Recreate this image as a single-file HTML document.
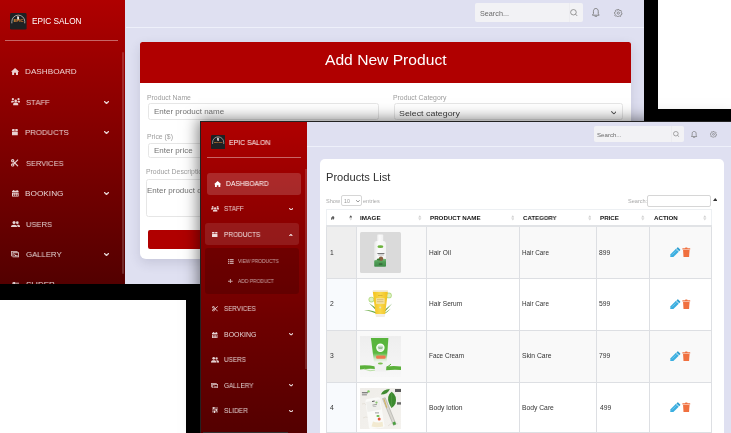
<!DOCTYPE html>
<html><head><meta charset="utf-8">
<style>
*{box-sizing:border-box;margin:0;padding:0}
html,body{width:731px;height:433px;overflow:hidden;background:#fff}
body{position:relative;font-family:"Liberation Sans",sans-serif}
.a{position:absolute}
.t{position:absolute;white-space:nowrap;line-height:1;will-change:transform}
</style></head><body>
<svg width="0" height="0" style="position:absolute">
<defs>
<symbol id="i-home" viewBox="0 0 16 14" preserveAspectRatio="none"><path d="M8 0 L16 7.2 L13.8 7.2 L13.8 14 L9.8 14 L9.8 9.5 L6.2 9.5 L6.2 14 L2.2 14 L2.2 7.2 L0 7.2 Z" fill="currentColor"/></symbol>
<symbol id="i-staff" viewBox="0 0 20 16" preserveAspectRatio="none"><g fill="currentColor"><circle cx="4" cy="2.6" r="2.4"/><circle cx="16" cy="2.6" r="2.4"/><path d="M0 10 C0 6.5 1.5 5.8 4 5.8 C5.5 5.8 6.3 6.2 6.8 6.8 C5.6 7.8 5 8.8 4.9 10 Z"/><path d="M20 10 C20 6.5 18.5 5.8 16 5.8 C14.5 5.8 13.7 6.2 13.2 6.8 C14.4 7.8 15 8.8 15.1 10 Z"/><circle cx="10" cy="6.3" r="2.9"/><path d="M4.6 16 V14.2 C4.6 11.2 6.5 10 10 10 C13.5 10 15.4 11.2 15.4 14.2 V16 Z"/></g></symbol>
<symbol id="i-box" viewBox="0 0 12 13" preserveAspectRatio="none"><g fill="currentColor"><path d="M0.8 0 H5.3 V4 H0 V1 Z"/><path d="M6.7 0 H11.2 L12 1 V4 H6.7 Z"/><rect x="0" y="5" width="12" height="8" rx="0.8"/></g></symbol>
<symbol id="i-scis" viewBox="0 0 16 16" preserveAspectRatio="none"><g fill="none" stroke="currentColor" stroke-width="2.4"><circle cx="3.6" cy="3.6" r="2.4"/><circle cx="3.6" cy="12.4" r="2.4"/><path d="M5.5 5.8 L15 14.8 M5.5 10.2 L15 1.2"/></g></symbol>
<symbol id="i-cal" viewBox="0 0 14 14" preserveAspectRatio="none"><g fill="currentColor"><rect x="2.5" y="0" width="2" height="3"/><rect x="9.5" y="0" width="2" height="3"/><rect x="0" y="1.8" width="14" height="3.4" rx="0.8"/><path d="M0 6.2 H14 V13.2 Q14 14 13.2 14 H0.8 Q0 14 0 13.2 Z M2 7.6 V9.2 H4.5 V7.6 Z M5.8 7.6 V9.2 H8.2 V7.6 Z M9.5 7.6 V9.2 H12 V7.6 Z M2 10.6 V12.2 H4.5 V10.6 Z M5.8 10.6 V12.2 H8.2 V10.6 Z M9.5 10.6 V12.2 H12 V10.6 Z" fill-rule="evenodd"/></g></symbol>
<symbol id="i-users" viewBox="0 0 18 13" preserveAspectRatio="none"><g fill="currentColor"><circle cx="6" cy="3" r="3"/><circle cx="12.5" cy="3.3" r="2.6"/><path d="M0 13 V11.5 C0 8.5 2 7.2 6 7.2 C10 7.2 12 8.5 12 11.5 V13 Z"/><path d="M13 13 V11.5 C13 9.8 12.5 8.6 11.5 7.7 C12 7.4 12.5 7.3 13 7.3 C16.3 7.3 18 8.6 18 11.3 V13 Z"/></g></symbol>
<symbol id="i-img" viewBox="0 0 16 13" preserveAspectRatio="none"><g fill="currentColor"><path d="M3 2.5 H15 Q16 2.5 16 3.5 V12 Q16 13 15 13 H4 Q3 13 3 12 Z M4.8 4.3 V11.2 H14.2 V4.3 Z" fill-rule="evenodd"/><path d="M1 0 H13 V1.6 H1.6 V10.5 H0 V1 Q0 0 1 0 Z"/><path d="M5.8 11 L9 7 L11 9 L12.3 7.8 L14 11 Z"/><circle cx="7" cy="6.3" r="1"/></g></symbol>
<symbol id="i-slid" viewBox="0 0 16 14" preserveAspectRatio="none"><g fill="currentColor"><rect x="0" y="1.5" width="16" height="1.8"/><rect x="0" y="6.1" width="16" height="1.8"/><rect x="0" y="10.7" width="16" height="1.8"/><rect x="3" y="0" width="3" height="4.8" rx="0.5"/><rect x="10" y="4.6" width="3" height="4.8" rx="0.5"/><rect x="5" y="9.2" width="3" height="4.8" rx="0.5"/></g></symbol>
<symbol id="i-chev" viewBox="0 0 10 6" preserveAspectRatio="none"><path d="M1 1 L5 5 L9 1" fill="none" stroke="currentColor" stroke-width="2.6" stroke-linecap="round" stroke-linejoin="round"/></symbol>
<symbol id="i-chevup" viewBox="0 0 10 6" preserveAspectRatio="none"><path d="M1 5 L5 1 L9 5" fill="none" stroke="currentColor" stroke-width="2.6" stroke-linecap="round" stroke-linejoin="round"/></symbol>
<symbol id="i-search" viewBox="0 0 16 16" preserveAspectRatio="none"><g fill="none" stroke="currentColor" stroke-width="1.5"><circle cx="6.8" cy="6.8" r="5.6"/><path d="M10.9 10.9 L15.2 15.2"/></g></symbol>
<symbol id="i-bell" viewBox="0 0 14 16" preserveAspectRatio="none"><path d="M7 0.8 C4 0.8 2.6 3.2 2.6 6 V9.6 L0.8 12.4 H13.2 L11.4 9.6 V6 C11.4 3.2 10 0.8 7 0.8 Z M5 13.6 C5.2 14.8 6 15.3 7 15.3 C8 15.3 8.8 14.8 9 13.6" fill="none" stroke="currentColor" stroke-width="1.5" stroke-linejoin="round"/></symbol>
<symbol id="i-gear" viewBox="0 0 16 16" preserveAspectRatio="none"><g fill="none" stroke="currentColor" stroke-width="1.4" stroke-linejoin="round"><circle cx="8" cy="8" r="2.2"/><path d="M6.9 0.8 H9.1 L9.5 2.6 Q10.4 2.9 11.1 3.4 L12.8 2.6 L14.1 4.4 L12.9 5.8 Q13.2 6.6 13.3 7.4 L15.2 8 L15 10.2 L13.1 10.6 Q12.8 11.4 12.3 12 L13.1 13.6 L11.3 14.9 L10 13.7 Q9.2 14 8.4 14.1 L7.9 15.2 H6.3 L5.8 13.9 Q5 13.6 4.3 13.1 L2.7 13.9 L1.3 12.2 L2.4 10.8 Q2.1 10 2 9.2 L0.8 8.6 L1 6.4 L2.5 6 Q2.8 5.2 3.3 4.5 L2.6 2.9 L4.3 1.5 L5.6 2.6 Q6.3 2.3 7 2.2 Z"/></g></symbol>
<symbol id="i-list" viewBox="0 0 16 16" preserveAspectRatio="none"><g fill="currentColor"><rect x="0" y="0" width="3.5" height="4"/><rect x="5" y="0" width="11" height="4"/><rect x="0" y="6" width="3.5" height="4"/><rect x="5" y="6" width="11" height="4"/><rect x="0" y="12" width="3.5" height="4"/><rect x="5" y="12" width="11" height="4"/></g></symbol>
<symbol id="i-plus" viewBox="0 0 16 16" preserveAspectRatio="none"><path d="M8 0 V16 M0 8 H16" stroke="currentColor" stroke-width="3.4"/></symbol>
<symbol id="i-chevthin" viewBox="0 0 10 6" preserveAspectRatio="none"><path d="M1 1 L5 5 L9 1" fill="none" stroke="currentColor" stroke-width="1.7" stroke-linecap="round" stroke-linejoin="round"/></symbol>
</defs></svg>

<div class="a" style="left:0.00px;top:0.00px;width:658.00px;height:300.00px;background:#000"></div>
<div class="a" style="left:186.00px;top:108.60px;width:545.00px;height:325.00px;background:#000"></div>
<div class="a" id="s1" style="left:0;top:0;width:644px;height:284px;overflow:hidden;background:#dfe0f1"><div class="a" style="left:0.00px;top:0.00px;width:125.30px;height:284.00px;background:linear-gradient(180deg,rgb(175,0,0) 0%,rgb(128,0,0) 50%,rgb(83,0,0) 100%)"></div>
<div class="a" style="left:122.30px;top:52.00px;width:1.80px;height:221.50px;background:rgba(255,255,255,0.16);border-radius:1px"></div>
<svg class="a" style="left:10.4px;top:13.3px" width="16.6" height="16.6" viewBox="0 0 17 17"><rect width="17" height="17" rx="1.5" fill="#1e2123"/><path d="M1.9 10.6 V8.6 A6.6 6.4 0 0 1 15.1 8.6 V10.6" fill="none" stroke="#b4b4b4" stroke-width="0.9"/><path d="M7.5 3.4 Q9.4 2.8 9.3 4.8 Q8.8 6.2 9.6 6.8 L7.7 6.9 Q7 5.2 7.5 3.4 Z" fill="#f2f2f2"/><circle cx="8.2" cy="2.5" r="0.6" fill="#a0603a"/><text x="8.5" y="9.6" font-size="2.7" font-weight="bold" text-anchor="middle" textLength="10" lengthAdjust="spacingAndGlyphs" fill="#e0963c" font-family="Liberation Sans">EPIC</text></svg>
<div class="a" style="left:5.00px;top:40.00px;width:113.00px;height:1.00px;background:rgba(255,255,255,0.4)"></div>
<svg class="a" style="left:11.00px;top:67.90px;color:rgba(255,255,255,0.82);" width="8.1" height="7.1"><use href="#i-home"/></svg>
<svg class="a" style="left:10.50px;top:98.30px;color:rgba(255,255,255,0.82);" width="9.4" height="7.4"><use href="#i-staff"/></svg>
<svg class="a" style="left:103.50px;top:100.70px;color:rgba(255,255,255,0.82);" width="5" height="3"><use href="#i-chev"/></svg>
<svg class="a" style="left:12.10px;top:129.00px;color:rgba(255,255,255,0.82);" width="5.9" height="6.6"><use href="#i-box"/></svg>
<svg class="a" style="left:103.50px;top:131.20px;color:rgba(255,255,255,0.82);" width="5" height="3"><use href="#i-chev"/></svg>
<svg class="a" style="left:11.20px;top:158.80px;color:rgba(255,255,255,0.82);" width="7.6" height="7.8"><use href="#i-scis"/></svg>
<svg class="a" style="left:11.90px;top:190.00px;color:rgba(255,255,255,0.82);" width="6.8" height="6.7"><use href="#i-cal"/></svg>
<svg class="a" style="left:103.50px;top:192.20px;color:rgba(255,255,255,0.82);" width="5" height="3"><use href="#i-chev"/></svg>
<svg class="a" style="left:10.60px;top:220.50px;color:rgba(255,255,255,0.82);" width="9.1" height="6.6"><use href="#i-users"/></svg>
<svg class="a" style="left:11.10px;top:251.10px;color:rgba(255,255,255,0.82);" width="8.1" height="6.6"><use href="#i-img"/></svg>
<svg class="a" style="left:103.50px;top:253.20px;color:rgba(255,255,255,0.82);" width="5" height="3"><use href="#i-chev"/></svg>
<svg class="a" style="left:11.50px;top:281.50px;color:rgba(255,255,255,0.82);" width="7.5" height="6.8"><use href="#i-slid"/></svg>
<svg class="a" style="left:103.50px;top:283.70px;color:rgba(255,255,255,0.82);" width="5" height="3"><use href="#i-chev"/></svg>
<div class="a" style="left:126.00px;top:27.00px;width:518.00px;height:1.30px;background:#eef0fa"></div>
<div class="a" style="left:475.00px;top:2.50px;width:108.30px;height:19.60px;background:#f2f2f5;border-radius:2px"></div>
<div class="a" style="left:568.80px;top:2.50px;width:0.80px;height:19.60px;background:#ececf0"></div>
<svg class="a" style="left:570.00px;top:8.60px;color:#777;" width="8.1" height="7.7"><use href="#i-search"/></svg>
<svg class="a" style="left:592.10px;top:8.10px;color:#747474;" width="7.7" height="9.3"><use href="#i-bell"/></svg>
<svg class="a" style="left:614.20px;top:8.80px;color:#747474;" width="8.6" height="8.2"><use href="#i-gear"/></svg>
<div class="a" style="left:140.00px;top:42.40px;width:491.00px;height:216.40px;background:#fff;border-radius:3px 3px 6px 6px;box-shadow:0 4px 12px rgba(40,40,80,0.14)"></div>
<div class="a" style="left:140.00px;top:42.40px;width:491.00px;height:40.80px;background:#b00000;border-radius:2.5px 2.5px 0 0"></div>
<div class="a" style="left:148.00px;top:103.30px;width:231.00px;height:16.40px;border:1px solid #e6e6e6;border-radius:2.5px"></div>
<div class="a" style="left:393.50px;top:103.40px;width:229.70px;height:16.60px;border:1px solid #e6e6e6;border-radius:2.5px"></div>
<svg class="a" style="left:610.50px;top:111.00px;color:#505050;" width="5.8" height="3.6"><use href="#i-chevthin"/></svg>
<div class="a" style="left:148.00px;top:142.50px;width:231.00px;height:15.50px;border:1px solid #e6e6e6;border-radius:2.5px"></div>
<div class="a" style="left:146.40px;top:178.60px;width:477.00px;height:38.50px;border:1px solid #e6e6e6;border-radius:2.5px"></div>
<div class="a" style="left:148.00px;top:230.00px;width:475.00px;height:19.00px;background:#b00000;border-radius:2px"></div>
<div class="t" style="left:32.34px;top:18.43px;font-size:8.2px;color:#fff;font-weight:normal;transform:scaleX(1.0086);transform-origin:0 0;">EPIC SALON</div>
<div class="t" style="left:25.45px;top:68.40px;font-size:8px;color:rgba(255,255,255,0.82);font-weight:normal;transform:scaleX(1.0205);transform-origin:0 0;">DASHBOARD</div>
<div class="t" style="left:25.71px;top:98.90px;font-size:8px;color:rgba(255,255,255,0.82);font-weight:normal;transform:scaleX(0.9625);transform-origin:0 0;">STAFF</div>
<div class="t" style="left:25.48px;top:128.80px;font-size:8px;color:rgba(255,255,255,0.82);font-weight:normal;transform:scaleX(0.9745);transform-origin:0 0;">PRODUCTS</div>
<div class="t" style="left:25.73px;top:159.50px;font-size:8px;color:rgba(255,255,255,0.82);font-weight:normal;transform:scaleX(0.9312);transform-origin:0 0;">SERVICES</div>
<div class="t" style="left:25.44px;top:190.00px;font-size:8px;color:rgba(255,255,255,0.82);font-weight:normal;transform:scaleX(1.0310);transform-origin:0 0;">BOOKING</div>
<div class="t" style="left:25.50px;top:220.60px;font-size:8px;color:rgba(255,255,255,0.82);font-weight:normal;transform:scaleX(0.9450);transform-origin:0 0;">USERS</div>
<div class="t" style="left:25.71px;top:250.60px;font-size:8px;color:rgba(255,255,255,0.82);font-weight:normal;transform:scaleX(0.9679);transform-origin:0 0;">GALLERY</div>
<div class="t" style="left:25.70px;top:281.10px;font-size:8px;color:rgba(255,255,255,0.82);font-weight:normal;">SLIDER</div>
<div class="t" style="left:480.14px;top:9.55px;font-size:7px;color:#6a6a6a;font-weight:normal;transform:scaleX(1.0326);transform-origin:0 0;">Search...</div>
<div class="t" style="left:324.70px;top:53.00px;font-size:14px;color:#fff;font-weight:normal;transform:scaleX(1.1155);transform-origin:0 0;">Add New Product</div>
<div class="t" style="left:147.35px;top:94.57px;font-size:6.5px;color:#9c9c9c;font-weight:normal;transform:scaleX(1.0575);transform-origin:0 0;">Product Name</div>
<div class="t" style="left:392.75px;top:94.57px;font-size:6.5px;color:#9c9c9c;font-weight:normal;transform:scaleX(1.0575);transform-origin:0 0;">Product Category</div>
<div class="t" style="left:147.45px;top:133.67px;font-size:6.5px;color:#9c9c9c;font-weight:normal;transform:scaleX(1.0575);transform-origin:0 0;">Price ($)</div>
<div class="t" style="left:146.25px;top:169.38px;font-size:6.5px;color:#9c9c9c;font-weight:normal;transform:scaleX(1.0575);transform-origin:0 0;">Product Description</div>
<div class="t" style="left:154.16px;top:108.04px;font-size:7.6px;color:#727272;font-weight:normal;transform:scaleX(1.0514);transform-origin:0 0;">Enter product name</div>
<div class="t" style="left:153.96px;top:147.44px;font-size:7.6px;color:#727272;font-weight:normal;transform:scaleX(1.0514);transform-origin:0 0;">Enter price</div>
<div class="t" style="left:146.56px;top:186.94px;font-size:7.6px;color:#727272;font-weight:normal;transform:scaleX(1.0514);transform-origin:0 0;">Enter product description</div>
<div class="t" style="left:399.06px;top:109.70px;font-size:8px;color:#404040;font-weight:normal;transform:scaleX(1.1056);transform-origin:0 0;">Select category</div></div>
<div class="a" id="s2" style="left:200px;top:121px;width:531px;height:312px;background:#dfe0f1;box-shadow:0 0 14px 2px rgba(0,0,0,0.5)"><div class="a" style="left:0;top:0;width:531px;height:312px;overflow:hidden"><div class="a" style="left:0.00px;top:0.00px;width:107.00px;height:312.00px;background:linear-gradient(180deg,rgb(176,0,0) 0%,rgb(148,0,0) 25%,rgb(110,0,0) 64%,rgb(84,0,0) 100%)"></div>
<div class="a" style="left:104.50px;top:48.00px;width:2.20px;height:200.00px;background:rgba(255,255,255,0.14)"></div>
<svg class="a" style="left:10.7px;top:13.6px" width="14.3" height="14.3" viewBox="0 0 17 17"><rect width="17" height="17" rx="1.5" fill="#1e2123"/><path d="M1.9 10.6 V8.6 A6.6 6.4 0 0 1 15.1 8.6 V10.6" fill="none" stroke="#b4b4b4" stroke-width="0.9"/><path d="M7.5 3.4 Q9.4 2.8 9.3 4.8 Q8.8 6.2 9.6 6.8 L7.7 6.9 Q7 5.2 7.5 3.4 Z" fill="#f2f2f2"/><circle cx="8.2" cy="2.5" r="0.6" fill="#a0603a"/><text x="8.5" y="9.6" font-size="2.7" font-weight="bold" text-anchor="middle" textLength="10" lengthAdjust="spacingAndGlyphs" fill="#e0963c" font-family="Liberation Sans">EPIC</text></svg>
<div class="a" style="left:6.50px;top:36.00px;width:94.70px;height:1.00px;background:rgba(255,255,255,0.4)"></div>
<div class="a" style="left:7.00px;top:51.70px;width:94.20px;height:22.80px;background:rgba(255,255,255,0.16);border-radius:3px"></div>
<svg class="a" style="left:13.50px;top:60.00px;color:#fff;" width="7.3" height="6.3"><use href="#i-home"/></svg>
<svg class="a" style="left:10.80px;top:85.20px;color:rgba(255,255,255,0.82);" width="8.3" height="5.8"><use href="#i-staff"/></svg>
<svg class="a" style="left:88.80px;top:86.60px;color:rgba(255,255,255,0.82);" width="4.3" height="2.6"><use href="#i-chev"/></svg>
<div class="a" style="left:4.60px;top:102.30px;width:94.40px;height:22.20px;background:rgba(255,255,255,0.1);border-radius:3px"></div>
<svg class="a" style="left:12.00px;top:110.50px;color:rgba(255,255,255,0.85);" width="5.7" height="5.2"><use href="#i-box"/></svg>
<svg class="a" style="left:89.30px;top:112.80px;color:rgba(255,255,255,0.9);" width="3.8" height="2.5"><use href="#i-chevup"/></svg>
<div class="a" style="left:4.60px;top:126.80px;width:94.40px;height:46.70px;background:rgba(0,0,0,0.16);border-radius:3px"></div>
<svg class="a" style="left:28.00px;top:137.60px;color:rgba(255,255,255,0.62);" width="5.8" height="5.2"><use href="#i-list"/></svg>
<svg class="a" style="left:28.30px;top:157.80px;color:rgba(255,255,255,0.62);" width="4.8" height="4.6"><use href="#i-plus"/></svg>
<svg class="a" style="left:11.70px;top:185.00px;color:rgba(255,255,255,0.82);" width="6.2" height="5.6"><use href="#i-scis"/></svg>
<svg class="a" style="left:12.20px;top:210.50px;color:rgba(255,255,255,0.82);" width="5.7" height="6"><use href="#i-cal"/></svg>
<svg class="a" style="left:88.80px;top:212.20px;color:rgba(255,255,255,0.82);" width="4.3" height="2.6"><use href="#i-chev"/></svg>
<svg class="a" style="left:11.10px;top:235.80px;color:rgba(255,255,255,0.82);" width="8.1" height="5.8"><use href="#i-users"/></svg>
<svg class="a" style="left:11.10px;top:261.60px;color:rgba(255,255,255,0.82);" width="7.1" height="5.4"><use href="#i-img"/></svg>
<svg class="a" style="left:88.80px;top:263.20px;color:rgba(255,255,255,0.82);" width="4.3" height="2.6"><use href="#i-chev"/></svg>
<svg class="a" style="left:11.80px;top:286.40px;color:rgba(255,255,255,0.82);" width="6.1" height="5.9"><use href="#i-slid"/></svg>
<svg class="a" style="left:88.80px;top:288.50px;color:rgba(255,255,255,0.82);" width="4.3" height="2.6"><use href="#i-chev"/></svg>
<div class="a" style="left:2.80px;top:310.50px;width:85.00px;height:2.00px;background:#333"></div>
<div class="a" style="left:107.00px;top:24.50px;width:424.00px;height:1.20px;background:#eef0fa"></div>
<div class="a" style="left:393.50px;top:4.80px;width:90.40px;height:16.00px;background:#f2f2f5;border-radius:2px"></div>
<div class="a" style="left:471.00px;top:4.80px;width:0.80px;height:16.00px;background:#ececf0"></div>
<svg class="a" style="left:473.00px;top:10.00px;color:#777;" width="6.7" height="6.4"><use href="#i-search"/></svg>
<svg class="a" style="left:491.30px;top:9.60px;color:#747474;" width="6.3" height="7.1"><use href="#i-bell"/></svg>
<svg class="a" style="left:510.00px;top:10.00px;color:#747474;" width="7" height="6.7"><use href="#i-gear"/></svg>
<div class="a" style="left:120.20px;top:38.20px;width:403.50px;height:300.00px;background:#fff;border-radius:5px"></div>
<div class="a" style="left:141.00px;top:74.10px;width:20.80px;height:10.90px;border:1px solid #d6d6d6;border-radius:2px;background:#fff"></div>
<svg class="a" style="left:156.30px;top:78.80px;color:#666;" width="3.9" height="2.5"><use href="#i-chevthin"/></svg>
<div class="a" style="left:447.30px;top:74.30px;width:64.20px;height:12.20px;border:1px solid #d6d6d6;border-radius:2px;background:#fff"></div>
<svg class="a" style="left:512.7px;top:76.5px" width="4.5" height="3"><path d="M2.25 0 L4.5 3 H0 Z" fill="#333"/></svg>
<div class="a" style="left:126.00px;top:105.40px;width:385.50px;height:51.60px;background:#f9f9f9"></div>
<div class="a" style="left:126.00px;top:105.40px;width:30.50px;height:51.60px;background:#eeeeee"></div>
<div class="a" style="left:126.00px;top:157.00px;width:385.50px;height:52.20px;background:#ffffff"></div>
<div class="a" style="left:126.00px;top:157.00px;width:30.50px;height:52.20px;background:#f8fafd"></div>
<div class="a" style="left:126.00px;top:209.20px;width:385.50px;height:52.00px;background:#f9f9f9"></div>
<div class="a" style="left:126.00px;top:209.20px;width:30.50px;height:52.00px;background:#eeeeee"></div>
<div class="a" style="left:126.00px;top:261.20px;width:385.50px;height:50.10px;background:#ffffff"></div>
<div class="a" style="left:126.00px;top:261.20px;width:30.50px;height:50.10px;background:#f8fafd"></div>
<div class="a" style="left:126.00px;top:88.70px;width:385.50px;height:16.60px;background:#fff"></div>
<div class="a" style="left:125.50px;top:105.30px;width:1.00px;height:320.00px;background:#dddfe3"></div>
<div class="a" style="left:156.00px;top:105.30px;width:1.00px;height:320.00px;background:#dddfe3"></div>
<div class="a" style="left:225.70px;top:105.30px;width:1.00px;height:320.00px;background:#dddfe3"></div>
<div class="a" style="left:318.50px;top:105.30px;width:1.00px;height:320.00px;background:#dddfe3"></div>
<div class="a" style="left:396.00px;top:105.30px;width:1.00px;height:320.00px;background:#dddfe3"></div>
<div class="a" style="left:449.00px;top:105.30px;width:1.00px;height:320.00px;background:#dddfe3"></div>
<div class="a" style="left:511.00px;top:105.30px;width:1.00px;height:320.00px;background:#dddfe3"></div>
<div class="a" style="left:125.50px;top:88.70px;width:1.00px;height:16.60px;background:#edf0f3"></div>
<div class="a" style="left:511.00px;top:88.70px;width:1.00px;height:16.60px;background:#edf0f3"></div>
<div class="a" style="left:126.00px;top:88.20px;width:385.50px;height:1.00px;background:#edf0f3"></div>
<div class="a" style="left:126.00px;top:104.10px;width:385.50px;height:1.80px;background:#e1e3e6"></div>
<div class="a" style="left:126.00px;top:156.50px;width:385.50px;height:1.00px;background:#dddfe3"></div>
<div class="a" style="left:126.00px;top:208.70px;width:385.50px;height:1.00px;background:#dddfe3"></div>
<div class="a" style="left:126.00px;top:260.70px;width:385.50px;height:1.00px;background:#dddfe3"></div>
<div class="a" style="left:126.00px;top:310.80px;width:385.50px;height:1.00px;background:#dddfe3"></div>
<svg class="a" style="left:148.70px;top:94.2px" width="3.6" height="5.8" viewBox="0 0 4 9" preserveAspectRatio="none"><path d="M2 0.3 L3.8 3.9 H0.2 Z" fill="#505050"/><path d="M2 8.7 L3.8 5.1 H0.2 Z" fill="#d8d8d8"/></svg>
<svg class="a" style="left:218.00px;top:94.2px" width="3.6" height="5.8" viewBox="0 0 4 9" preserveAspectRatio="none"><path d="M2 0.3 L3.8 3.9 H0.2 Z" fill="#d0d0d0"/><path d="M2 8.7 L3.8 5.1 H0.2 Z" fill="#d8d8d8"/></svg>
<svg class="a" style="left:310.70px;top:94.2px" width="3.6" height="5.8" viewBox="0 0 4 9" preserveAspectRatio="none"><path d="M2 0.3 L3.8 3.9 H0.2 Z" fill="#d0d0d0"/><path d="M2 8.7 L3.8 5.1 H0.2 Z" fill="#d8d8d8"/></svg>
<svg class="a" style="left:387.60px;top:94.2px" width="3.6" height="5.8" viewBox="0 0 4 9" preserveAspectRatio="none"><path d="M2 0.3 L3.8 3.9 H0.2 Z" fill="#d0d0d0"/><path d="M2 8.7 L3.8 5.1 H0.2 Z" fill="#d8d8d8"/></svg>
<svg class="a" style="left:441.00px;top:94.2px" width="3.6" height="5.8" viewBox="0 0 4 9" preserveAspectRatio="none"><path d="M2 0.3 L3.8 3.9 H0.2 Z" fill="#d0d0d0"/><path d="M2 8.7 L3.8 5.1 H0.2 Z" fill="#d8d8d8"/></svg>
<svg class="a" style="left:503.00px;top:94.2px" width="3.6" height="5.8" viewBox="0 0 4 9" preserveAspectRatio="none"><path d="M2 0.3 L3.8 3.9 H0.2 Z" fill="#d0d0d0"/><path d="M2 8.7 L3.8 5.1 H0.2 Z" fill="#d8d8d8"/></svg>
<svg class="a" style="left:470.3px;top:125.60px" width="10.6" height="10.6" viewBox="0 0 16 16"><path d="M12.4 0.6 L15.4 3.6 Q16 4.2 15.4 4.8 L13.9 6.3 L9.7 2.1 L11.2 0.6 Q11.8 0 12.4 0.6 Z" fill="#2f9fd0"/><path d="M9 2.8 L13.2 7 L5 15.2 L0.3 15.7 L0.8 11 Z" fill="#3aaee0"/><path d="M2.6 12.4 L10.6 4.4" stroke="#d8f0fa" stroke-width="0.8" stroke-dasharray="1.4 1.2"/></svg>
<svg class="a" style="left:482px;top:126.00px" width="8.6" height="10.4" viewBox="0 0 13 16"><path d="M0.5 2 H4.5 L5.2 0.8 H7.8 L8.5 2 H12.5 V4 H0.5 Z" fill="#f0703f"/><path d="M1.5 4.6 H11.5 L10.8 15.4 H2.2 Z" fill="#f0703f"/></svg>
<div class="a" style="left:160px;top:111.00px;width:41px;height:41px"><svg width="41" height="41" viewBox="0 0 41 41"><defs><linearGradient id="bo1" x1="0" x2="1"><stop offset="0" stop-color="#e8e8e8"/><stop offset="0.35" stop-color="#fbfbfb"/><stop offset="1" stop-color="#f2f2f2"/></linearGradient><linearGradient id="gb1" x1="0" y1="0" x2="0" y2="1"><stop offset="0" stop-color="#7cc080"/><stop offset="0.4" stop-color="#4f9d55"/><stop offset="1" stop-color="#3f8a48"/></linearGradient></defs>
<rect x="0" y="0" width="41" height="41" rx="1.5" fill="#dadada"/>
<rect x="17" y="2.4" width="6.2" height="7" rx="0.8" fill="url(#bo1)"/>
<path d="M14.2 12 Q14.2 9 17 9 H23.2 Q26 9 26 12 V34 Q26 34.8 25.2 34.8 H15 Q14.2 34.8 14.2 34 Z" fill="url(#bo1)"/>
<ellipse cx="20.4" cy="14.7" rx="3" ry="1.4" fill="#6cb23c"/>
<rect x="17.4" y="21" width="7" height="1" fill="#777"/><rect x="18.2" y="22.6" width="5.6" height="0.7" fill="#999"/>
<path d="M14.2 28.5 Q20 26 26 27 V34 Q26 34.8 25.2 34.8 H15 Q14.2 34.8 14.2 34 Z" fill="url(#gb1)"/>
<circle cx="21" cy="26.8" r="2.2" fill="#8a6040"/><ellipse cx="18.6" cy="27.6" rx="1.8" ry="1" fill="#3a7a30"/>
<rect x="18.8" y="31.6" width="3.6" height="0.9" fill="#2a4a2a"/></svg></div>
<svg class="a" style="left:470.3px;top:177.50px" width="10.6" height="10.6" viewBox="0 0 16 16"><path d="M12.4 0.6 L15.4 3.6 Q16 4.2 15.4 4.8 L13.9 6.3 L9.7 2.1 L11.2 0.6 Q11.8 0 12.4 0.6 Z" fill="#2f9fd0"/><path d="M9 2.8 L13.2 7 L5 15.2 L0.3 15.7 L0.8 11 Z" fill="#3aaee0"/><path d="M2.6 12.4 L10.6 4.4" stroke="#d8f0fa" stroke-width="0.8" stroke-dasharray="1.4 1.2"/></svg>
<svg class="a" style="left:482px;top:177.90px" width="8.6" height="10.4" viewBox="0 0 13 16"><path d="M0.5 2 H4.5 L5.2 0.8 H7.8 L8.5 2 H12.5 V4 H0.5 Z" fill="#f0703f"/><path d="M1.5 4.6 H11.5 L10.8 15.4 H2.2 Z" fill="#f0703f"/></svg>
<div class="a" style="left:160px;top:162.60px;width:41px;height:41px"><svg width="41" height="41" viewBox="0 0 41 41"><defs><linearGradient id="yt2" x1="0" x2="1"><stop offset="0" stop-color="#f3c21e"/><stop offset="0.5" stop-color="#f9d84a"/><stop offset="1" stop-color="#f0c020"/></linearGradient></defs>
<circle cx="11.4" cy="15.6" r="2.9" fill="#b4dc84"/><circle cx="11.4" cy="15.6" r="2" fill="#dff0c6"/>
<circle cx="28.9" cy="11.4" r="2.9" fill="#b4dc84"/><circle cx="28.9" cy="11.4" r="2" fill="#dff0c6"/>
<path d="M20 30.5 Q14 24 9 19 Q15 22.5 20.5 29 Z" fill="#5e9e3a"/>
<path d="M19.5 31 Q11 27 4 26 Q12 25.5 20 30 Z" fill="#6aab45"/>
<path d="M21 30.5 Q26 24 32.2 19.4 Q27.5 24.5 22 31 Z" fill="#5e9e3a"/>
<path d="M21.5 31 Q27 27.5 31 24.5 Q27.5 28.5 22 31.5 Z" fill="#6aab45"/>
<path d="M12.8 7.6 H27.9 L25.1 30.3 H15.6 Z" fill="url(#yt2)"/>
<rect x="12.8" y="6.2" width="15.1" height="1.6" fill="#f1e8d2"/>
<rect x="18" y="11" width="4.5" height="0.6" fill="#c9a030"/>
<rect x="16.1" y="14.2" width="8.5" height="5.7" fill="#f4e2a0"/><rect x="17" y="15.5" width="6.5" height="0.6" fill="#c8a860"/><rect x="17" y="17.5" width="6.5" height="0.6" fill="#c8a860"/>
<circle cx="20.2" cy="23.5" r="1" fill="#e8e0c0"/>
<path d="M15.6 30 H25.1 L24.8 32.4 Q24.7 32.9 24.2 32.9 H16.5 Q16 32.9 15.9 32.4 Z" fill="#f3eee6"/></svg></div>
<svg class="a" style="left:470.3px;top:229.60px" width="10.6" height="10.6" viewBox="0 0 16 16"><path d="M12.4 0.6 L15.4 3.6 Q16 4.2 15.4 4.8 L13.9 6.3 L9.7 2.1 L11.2 0.6 Q11.8 0 12.4 0.6 Z" fill="#2f9fd0"/><path d="M9 2.8 L13.2 7 L5 15.2 L0.3 15.7 L0.8 11 Z" fill="#3aaee0"/><path d="M2.6 12.4 L10.6 4.4" stroke="#d8f0fa" stroke-width="0.8" stroke-dasharray="1.4 1.2"/></svg>
<svg class="a" style="left:482px;top:230.00px" width="8.6" height="10.4" viewBox="0 0 13 16"><path d="M0.5 2 H4.5 L5.2 0.8 H7.8 L8.5 2 H12.5 V4 H0.5 Z" fill="#f0703f"/><path d="M1.5 4.6 H11.5 L10.8 15.4 H2.2 Z" fill="#f0703f"/></svg>
<div class="a" style="left:160px;top:214.80px;width:41px;height:41px"><svg width="41" height="41" viewBox="0 0 41 41"><defs><linearGradient id="gt3" x1="0" y1="0" x2="0" y2="1"><stop offset="0" stop-color="#58b43c"/><stop offset="0.45" stop-color="#5cb840"/><stop offset="0.62" stop-color="#cfe8c4"/><stop offset="0.72" stop-color="#f2f4f2"/><stop offset="1" stop-color="#f0f0f0"/></linearGradient><linearGradient id="bg3" x1="0" y1="0" x2="0" y2="1"><stop offset="0" stop-color="#eeeeee"/><stop offset="1" stop-color="#f7f7f7"/></linearGradient></defs>
<rect width="41" height="41" fill="url(#bg3)"/>
<path d="M0 29.5 Q8 28.8 15.5 30.5 L15.5 33 Q8 32.5 0 33.5 Z" fill="#5ab03a"/>
<path d="M26 30.5 Q34 29.5 41 30.5 L41 34 Q34 33.5 26 34.2 Z" fill="#5ab03a"/>
<path d="M4 33 Q10 36 16 34" stroke="#a8d890" stroke-width="0.8" fill="none"/>
<path d="M10.9 1.9 H28.4 L26 35.5 H15.2 Z" fill="url(#gt3)"/>
<circle cx="20.4" cy="11.8" r="4.2" fill="#ffffff"/><circle cx="20.4" cy="11.8" r="3.1" fill="#e4efe0"/><rect x="18" y="10.8" width="4.8" height="0.7" fill="#5a9a5a"/><rect x="18.5" y="12.3" width="3.8" height="0.6" fill="#5a9a5a"/>
<rect x="16.1" y="19.4" width="9.5" height="3.3" rx="1.2" fill="#f07850"/>
<ellipse cx="20.4" cy="27.5" rx="2.5" ry="1" fill="#7cc050"/>
<path d="M31 28 Q29 30 27 31" stroke="#5ab03a" stroke-width="1" fill="none"/></svg></div>
<svg class="a" style="left:470.3px;top:280.65px" width="10.6" height="10.6" viewBox="0 0 16 16"><path d="M12.4 0.6 L15.4 3.6 Q16 4.2 15.4 4.8 L13.9 6.3 L9.7 2.1 L11.2 0.6 Q11.8 0 12.4 0.6 Z" fill="#2f9fd0"/><path d="M9 2.8 L13.2 7 L5 15.2 L0.3 15.7 L0.8 11 Z" fill="#3aaee0"/><path d="M2.6 12.4 L10.6 4.4" stroke="#d8f0fa" stroke-width="0.8" stroke-dasharray="1.4 1.2"/></svg>
<svg class="a" style="left:482px;top:281.05px" width="8.6" height="10.4" viewBox="0 0 13 16"><path d="M0.5 2 H4.5 L5.2 0.8 H7.8 L8.5 2 H12.5 V4 H0.5 Z" fill="#f0703f"/><path d="M1.5 4.6 H11.5 L10.8 15.4 H2.2 Z" fill="#f0703f"/></svg>
<div class="a" style="left:160px;top:266.80px;width:41px;height:41px"><svg width="41" height="41" viewBox="0 0 41 41"><defs><linearGradient id="bg4" x1="0" y1="0" x2="1" y2="1"><stop offset="0" stop-color="#efede9"/><stop offset="1" stop-color="#f4f2ee"/></linearGradient></defs>
<rect width="41" height="41" fill="url(#bg4)"/>
<path d="M3 30 Q8 27 12 33 M28 38 Q33 33 38 36 M2 16 Q5 14 7 18" stroke="#e2ddd4" stroke-width="0.8" fill="none"/>
<rect x="1.9" y="4.2" width="6" height="1.1" fill="#666"/><rect x="1.9" y="6.4" width="5" height="0.9" fill="#777"/><circle cx="8.5" cy="3.4" r="1.2" fill="#7cc860"/>
<rect x="35" y="1" width="6" height="3" fill="#5a5a5a"/><rect x="37" y="14.2" width="4" height="2.4" fill="#6a6a6a"/>
<path d="M5.5 13.5 Q5.3 11.5 7.2 11 L18 9.2 Q19.8 9 20.2 10.8 L24.5 37.5 Q24.8 39.3 23 39.6 L11 41 Q9.2 41.2 9 39.4 Z" fill="#fafaf8"/>
<path d="M6 14 L19.5 11.5 L21 21.5 L7.6 24 Z" fill="#efefec"/>
<rect x="12" y="12.8" width="2.6" height="1" fill="#555" transform="rotate(-10 13 13)"/><circle cx="16.5" cy="14.6" r="1.1" fill="#8cc870"/><rect x="12.5" y="16.5" width="4.5" height="0.8" fill="#888" transform="rotate(-10 14 17)"/><rect x="12.8" y="18.2" width="3.5" height="0.7" fill="#aaa" transform="rotate(-10 14 18.5)"/>
<rect x="15" y="24.5" width="4" height="0.8" fill="#888"/><ellipse cx="18" cy="28" rx="1.6" ry="1" fill="#6cbc50"/><circle cx="19.2" cy="31" r="1.5" fill="#e45a3a"/>
<path d="M13 33.5 Q18 35.5 22.5 33.8 L23.2 38.5 Q17 39.8 11.5 38.5 Z" fill="#efe4c4" opacity="0.75"/>
<path d="M22.5 10.6 L25.2 9.8 L36 36.3 L33.4 37.3 Z" fill="#d9d7d0" stroke="#9a9a96" stroke-width="0.5"/><path d="M23.4 11 L24.4 10.7 L27.3 19.6 L26.3 19.9 Z" fill="#d4b460"/>
<path d="M32.6 34.5 L35 33.6 L36 36.3 L33.4 37.3 Z" fill="#4aa040"/>
<path d="M20.8 6.6 Q23 1 29.8 0.9 Q28 6.5 20.8 6.6 Z" fill="#3f8a30"/>
<path d="M31.7 3.8 Q37.5 8 35.5 15.5 Q34 19 31.5 19.9 Q27.5 14 28.2 9 Q29 5.5 31.7 3.8 Z" fill="#3c8a2e"/><path d="M31.7 4.5 L31.5 19.5" stroke="#68a858" stroke-width="0.4"/>
</svg></div>
<div class="t" style="left:29.35px;top:18.05px;font-size:7px;color:#fff;font-weight:normal;transform:scaleX(0.9834);transform-origin:0 0;">EPIC SALON</div>
<div class="t" style="left:25.96px;top:59.97px;font-size:6.8px;color:#fff;font-weight:normal;transform:scaleX(0.9875);transform-origin:0 0;">DASHBOARD</div>
<div class="t" style="left:23.88px;top:85.12px;font-size:6.8px;color:rgba(255,255,255,0.82);font-weight:normal;transform:scaleX(0.9412);transform-origin:0 0;">STAFF</div>
<div class="t" style="left:23.68px;top:110.72px;font-size:6.8px;color:rgba(255,255,255,0.9);font-weight:normal;transform:scaleX(0.9536);transform-origin:0 0;">PRODUCTS</div>
<div class="t" style="left:23.79px;top:185.32px;font-size:6.8px;color:rgba(255,255,255,0.82);font-weight:normal;transform:scaleX(0.9258);transform-origin:0 0;">SERVICES</div>
<div class="t" style="left:23.54px;top:210.72px;font-size:6.8px;color:rgba(255,255,255,0.82);font-weight:normal;transform:scaleX(1.0206);transform-origin:0 0;">BOOKING</div>
<div class="t" style="left:23.59px;top:235.82px;font-size:6.8px;color:rgba(255,255,255,0.82);font-weight:normal;transform:scaleX(0.9302);transform-origin:0 0;">USERS</div>
<div class="t" style="left:23.78px;top:261.72px;font-size:6.8px;color:rgba(255,255,255,0.82);font-weight:normal;transform:scaleX(0.9435);transform-origin:0 0;">GALLERY</div>
<div class="t" style="left:23.77px;top:287.02px;font-size:6.8px;color:rgba(255,255,255,0.82);font-weight:normal;transform:scaleX(0.9720);transform-origin:0 0;">SLIDER</div>
<div class="t" style="left:37.85px;top:138.35px;font-size:5px;color:rgba(255,255,255,0.62);font-weight:normal;transform:scaleX(0.9631);transform-origin:0 0;">VIEW PRODUCTS</div>
<div class="t" style="left:37.90px;top:158.15px;font-size:5px;color:rgba(255,255,255,0.62);font-weight:normal;transform:scaleX(0.9795);transform-origin:0 0;">ADD PRODUCT</div>
<div class="t" style="left:397.39px;top:10.80px;font-size:6px;color:#6a6a6a;font-weight:normal;transform:scaleX(1.0190);transform-origin:0 0;">Search...</div>
<div class="t" style="left:125.51px;top:50.67px;font-size:10.5px;color:#2f2f2f;font-weight:normal;transform:scaleX(1.0595);transform-origin:0 0;">Products List</div>
<div class="t" style="left:125.72px;top:77.90px;font-size:5.3px;color:#a8a8a8;font-weight:normal;transform:scaleX(1.0551);transform-origin:0 0;">Show</div>
<div class="t" style="left:163.28px;top:77.90px;font-size:5.3px;color:#a8a8a8;font-weight:normal;transform:scaleX(1.0551);transform-origin:0 0;">entries</div>
<div class="t" style="left:427.92px;top:77.90px;font-size:5.3px;color:#a8a8a8;font-weight:normal;transform:scaleX(1.0551);transform-origin:0 0;">Search:</div>
<div class="t" style="left:144.18px;top:78.25px;font-size:5px;color:#9a9a9a;font-weight:normal;transform:scaleX(1.0505);transform-origin:0 0;">10</div>
<div class="t" style="left:160.36px;top:93.93px;font-size:6.2px;color:#151515;font-weight:bold;transform:scaleX(1.0176);transform-origin:0 0;">IMAGE</div>
<div class="t" style="left:130.58px;top:93.93px;font-size:6.2px;color:#151515;font-weight:bold;transform:scaleX(0.9946);transform-origin:0 0;">#</div>
<div class="t" style="left:230.07px;top:93.93px;font-size:6.2px;color:#151515;font-weight:bold;transform:scaleX(0.9906);transform-origin:0 0;">PRODUCT NAME</div>
<div class="t" style="left:322.76px;top:93.93px;font-size:6.2px;color:#151515;font-weight:bold;transform:scaleX(0.9765);transform-origin:0 0;">CATEGORY</div>
<div class="t" style="left:400.07px;top:93.93px;font-size:6.2px;color:#151515;font-weight:bold;">PRICE</div>
<div class="t" style="left:453.82px;top:93.93px;font-size:6.2px;color:#151515;font-weight:bold;transform:scaleX(0.9946);transform-origin:0 0;">ACTION</div>
<div class="t" style="left:129.66px;top:128.65px;font-size:6.3px;color:#333;font-weight:normal;transform:scaleX(1.0714);transform-origin:0 0;">1</div>
<div class="t" style="left:229.28px;top:128.65px;font-size:6.3px;color:#333;font-weight:normal;transform:scaleX(1.0400);transform-origin:0 0;">Hair Oil</div>
<div class="t" style="left:322.30px;top:128.65px;font-size:6.3px;color:#333;font-weight:normal;transform:scaleX(0.9945);transform-origin:0 0;">Hair Care</div>
<div class="t" style="left:399.43px;top:128.65px;font-size:6.3px;color:#333;font-weight:normal;transform:scaleX(1.0649);transform-origin:0 0;">899</div>
<div class="t" style="left:129.86px;top:180.34px;font-size:6.3px;color:#333;font-weight:normal;transform:scaleX(1.0714);transform-origin:0 0;">2</div>
<div class="t" style="left:229.28px;top:180.34px;font-size:6.3px;color:#333;font-weight:normal;transform:scaleX(1.0410);transform-origin:0 0;">Hair Serum</div>
<div class="t" style="left:322.30px;top:180.34px;font-size:6.3px;color:#333;font-weight:normal;transform:scaleX(0.9945);transform-origin:0 0;">Hair Care</div>
<div class="t" style="left:399.43px;top:180.34px;font-size:6.3px;color:#333;font-weight:normal;transform:scaleX(1.0714);transform-origin:0 0;">599</div>
<div class="t" style="left:129.93px;top:232.15px;font-size:6.3px;color:#333;font-weight:normal;transform:scaleX(1.0714);transform-origin:0 0;">3</div>
<div class="t" style="left:229.29px;top:232.15px;font-size:6.3px;color:#333;font-weight:normal;transform:scaleX(1.0088);transform-origin:0 0;">Face Cream</div>
<div class="t" style="left:322.46px;top:232.15px;font-size:6.3px;color:#333;font-weight:normal;transform:scaleX(1.0714);transform-origin:0 0;">Skin Care</div>
<div class="t" style="left:399.36px;top:232.15px;font-size:6.3px;color:#333;font-weight:normal;transform:scaleX(1.0714);transform-origin:0 0;">799</div>
<div class="t" style="left:130.06px;top:283.94px;font-size:6.3px;color:#333;font-weight:normal;transform:scaleX(1.0714);transform-origin:0 0;">4</div>
<div class="t" style="left:229.26px;top:283.94px;font-size:6.3px;color:#333;font-weight:normal;transform:scaleX(1.0714);transform-origin:0 0;">Body lotion</div>
<div class="t" style="left:322.26px;top:283.94px;font-size:6.3px;color:#333;font-weight:normal;transform:scaleX(1.0714);transform-origin:0 0;">Body Care</div>
<div class="t" style="left:399.57px;top:283.94px;font-size:6.3px;color:#333;font-weight:normal;transform:scaleX(1.0714);transform-origin:0 0;">499</div></div><div class="a" style="left:0;top:0;width:531px;height:1px;background:#222"></div><div class="a" style="left:0;top:0;width:1px;height:312px;background:#222"></div></div>
</body></html>
